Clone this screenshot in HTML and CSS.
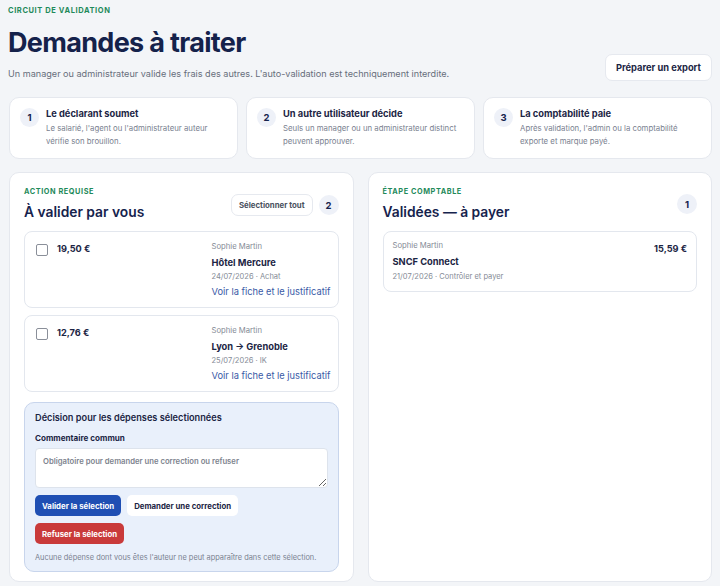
FILE: index.html
```html
<!DOCTYPE html>
<html lang="fr">
<head>
    <meta charset="UTF-8">
    <meta name="viewport" content="width=device-width, initial-scale=1.0">
    <title>Demandes à traiter</title>
    <link rel="stylesheet" href="styles.css">
</head>
<body>
<div class="page">

    <header class="header">
        <div class="header-text">
            <div class="eyebrow">Circuit de validation</div>
            <h1>Demandes à traiter</h1>
            <p class="lead">Un manager ou administrateur valide les frais des autres. L'auto-validation est techniquement interdite.</p>
        </div>
        <button class="btn btn-light">Préparer un export</button>
    </header>

    <div class="steps">
        <div class="step">
            <span class="step-num">1</span>
            <div>
                <div class="step-title">Le déclarant soumet</div>
                <div class="step-text">Le salarié, l'agent ou l'administrateur auteur vérifie son brouillon.</div>
            </div>
        </div>
        <div class="step">
            <span class="step-num">2</span>
            <div>
                <div class="step-title">Un autre utilisateur décide</div>
                <div class="step-text">Seuls un manager ou un administrateur distinct peuvent approuver.</div>
            </div>
        </div>
        <div class="step">
            <span class="step-num">3</span>
            <div>
                <div class="step-title">La comptabilité paie</div>
                <div class="step-text">Après validation, l'admin ou la comptabilité exporte et marque payé.</div>
            </div>
        </div>
    </div>

    <div class="columns">
        <section class="panel">
            <div class="panel-head">
                <div>
                    <div class="eyebrow small">Action requise</div>
                    <h2>À valider par vous</h2>
                </div>
                <div class="panel-tools">
                    <button class="btn btn-small">Sélectionner tout</button>
                    <span class="count">2</span>
                </div>
            </div>

            <div class="expense">
                <span class="checkbox"></span>
                <div class="amount">19,50 €</div>
                <div class="expense-info">
                    <div class="who">Sophie Martin</div>
                    <div class="label">Hôtel Mercure</div>
                    <div class="meta">24/07/2026 · Achat</div>
                    <a href="#" class="link">Voir la fiche et le justificatif</a>
                </div>
            </div>

            <div class="expense">
                <span class="checkbox"></span>
                <div class="amount">12,76 €</div>
                <div class="expense-info">
                    <div class="who">Sophie Martin</div>
                    <div class="label">Lyon → Grenoble</div>
                    <div class="meta">25/07/2026 · IK</div>
                    <a href="#" class="link">Voir la fiche et le justificatif</a>
                </div>
            </div>

            <div class="decision">
                <div class="decision-title">Décision pour les dépenses sélectionnées</div>
                <label for="comment">Commentaire commun</label>
                <textarea id="comment" placeholder="Obligatoire pour demander une correction ou refuser"></textarea>
                <div class="actions">
                    <button class="btn btn-primary">Valider la sélection</button>
                    <button class="btn btn-white">Demander une correction</button>
                </div>
                <div class="actions">
                    <button class="btn btn-danger">Refuser la sélection</button>
                </div>
                <p class="note">Aucune dépense dont vous êtes l'auteur ne peut apparaître dans cette sélection.</p>
            </div>
        </section>

        <section class="panel">
            <div class="panel-head">
                <div>
                    <div class="eyebrow small">Étape comptable</div>
                    <h2>Validées — à payer</h2>
                </div>
                <div class="panel-tools">
                    <span class="count">1</span>
                </div>
            </div>

            <div class="expense paid">
                <div class="expense-info">
                    <div class="who">Sophie Martin</div>
                    <div class="label">SNCF Connect</div>
                    <div class="meta">21/07/2026 · Contrôler et payer</div>
                </div>
                <div class="amount">15,59 €</div>
            </div>
        </section>
    </div>

</div>
</body>
</html>
```

FILE: styles.css
```css
body {
    margin: 0;
    font-family: Inter, "Noto Sans", sans-serif;
    background-color: #f3f5f8;
    color: #16234d;
}

.page {
    padding: 6px 8px 4px;
}

button {
    font-family: inherit;
    cursor: pointer;
}

/* header */

.header {
    display: flex;
    justify-content: space-between;
    align-items: flex-end;
}

.eyebrow {
    font-size: 7.5px;
    font-weight: 700;
    letter-spacing: 0.08em;
    text-transform: uppercase;
    color: #1f8a5b;
}

.eyebrow.small {
    font-size: 7.3px;
}

h1 {
    margin: 11px 0 7px;
    font-size: 27px;
    line-height: 34px;
    font-weight: 700;
    letter-spacing: -0.025em;
    color: #15224b;
}

.lead {
    margin: 0;
    font-size: 9.1px;
    color: #676e7b;
    line-height: 14px;
}

.btn {
    border-radius: 7px;
    font-weight: 700;
    border: none;
}

.btn-light {
    background: #fff;
    border: 1px solid #e6e9ef;
    padding: 0 10px;
    height: 27px;
    font-size: 9.3px;
    color: #1c2544;
}

/* steps */

.steps {
    display: grid;
    grid-template-columns: repeat(3, 1fr);
    gap: 8px;
    margin: 16px 0 13px 1px;
}

.step {
    display: flex;
    gap: 7px;
    background: #fff;
    border: 1px solid #e5e8ee;
    border-radius: 10px;
    padding: 9px 10px 10px;
    height: 41px;
}

.step-num {
    flex: none;
    width: 19px;
    height: 19px;
    border-radius: 50%;
    background: #eef1f8;
    font-size: 9.5px;
    font-weight: 700;
    display: flex;
    align-items: center;
    justify-content: center;
    margin-top: 1px;
}

.step-title {
    font-size: 9.3px;
    font-weight: 700;
    color: #1c2544;
    line-height: 14px;
}

.step-text {
    font-size: 7.8px;
    color: #7a8190;
    line-height: 13px;
    margin-top: 1px;
}

/* columns */

.columns {
    display: grid;
    grid-template-columns: 1fr 1fr;
    gap: 14px;
    margin-left: 1px;
}

.panel {
    background: #fff;
    border: 1px solid #e5e8ee;
    border-radius: 10px;
    padding: 14px 14px 9px;
}

.panel-head {
    display: flex;
    justify-content: space-between;
    align-items: flex-start;
    margin-bottom: 9px;
}

h2 {
    margin: 6px 0 0;
    font-size: 13.8px;
    line-height: 20px;
    font-weight: 600;
    color: #16234d;
}

.panel-tools {
    display: flex;
    align-items: center;
    gap: 6px;
    margin-top: 7px;
}

.btn-small {
    background: #fff;
    border: 1px solid #e6e9ef;
    height: 22px;
    padding: 0 7px;
    font-size: 7.8px;
    color: #4a5160;
}

.count {
    width: 20px;
    height: 20px;
    border-radius: 50%;
    background: #eef1f8;
    font-size: 9.5px;
    font-weight: 700;
    display: flex;
    align-items: center;
    justify-content: center;
}

/* expense cards */

.expense {
    display: flex;
    border: 1px solid #e3e7ee;
    border-radius: 8px;
    padding: 9px 10px 8px 11px;
    margin-bottom: 7px;
}

.checkbox {
    flex: none;
    width: 10px;
    height: 10px;
    border: 1px solid #8a8f99;
    border-radius: 2px;
    margin-top: 3px;
    margin-right: 9px;
}

.amount {
    font-size: 9.2px;
    font-weight: 700;
    color: #1c2544;
    flex: 1;
    line-height: 14px;
    margin-top: 1px;
}

.expense-info {
    width: 116px;
    white-space: nowrap;
}

.who {
    font-size: 7.7px;
    color: #858b96;
    line-height: 12px;
}

.label {
    font-size: 9.3px;
    font-weight: 700;
    color: #1c2544;
    line-height: 14px;
    margin-top: 3px;
}

.meta {
    font-size: 7.5px;
    color: #858b96;
    line-height: 12px;
    margin-top: 1px;
}

.link {
    display: block;
    font-size: 9.3px;
    color: #3a5aa6;
    text-decoration: none;
    line-height: 14px;
    margin-top: 2px;
}

.expense.paid {
    padding: 8px 9px 8px;
}

.expense.paid .expense-info {
    width: auto;
    flex: 1;
}

.expense.paid .amount {
    flex: none;
    margin-top: 2px;
}

.expense.paid .label {
    margin-top: 3px;
}

.expense.paid .meta {
    margin-top: 2px;
}

/* decision box */

.decision {
    margin-top: 10px;
    background: #e9f0fb;
    border: 1px solid #c8d5ec;
    border-radius: 10px;
    padding: 8px 10px 9px;
}

.decision-title {
    font-size: 9.2px;
    font-weight: 600;
    color: #1c2544;
    line-height: 14px;
}

.decision label {
    display: block;
    font-size: 8.1px;
    font-weight: 700;
    color: #1c2544;
    margin: 8px 0 5px;
}

.decision textarea {
    display: block;
    width: 100%;
    box-sizing: border-box;
    height: 40px;
    border: 1px solid #dde3ec;
    border-radius: 4px;
    padding: 8px 7px;
    font-family: inherit;
    font-size: 7.7px;
    font-weight: 600;
    resize: vertical;
}

.decision textarea::placeholder {
    color: #7d838e;
}

.actions {
    display: flex;
    gap: 6px;
    margin-top: 7px;
}

.actions .btn {
    height: 21px;
    padding: 0 7px;
    font-size: 7.8px;
    border-radius: 5px;
}

.btn-primary {
    background: #1f4fb3;
    color: #fff;
}

.btn-white {
    background: #fff;
    color: #1c2544;
}

.btn-danger {
    background: #c93a3a;
    color: #fff;
}

.note {
    margin: 9px 0 0;
    font-size: 7.4px;
    color: #7a8190;
}
```
